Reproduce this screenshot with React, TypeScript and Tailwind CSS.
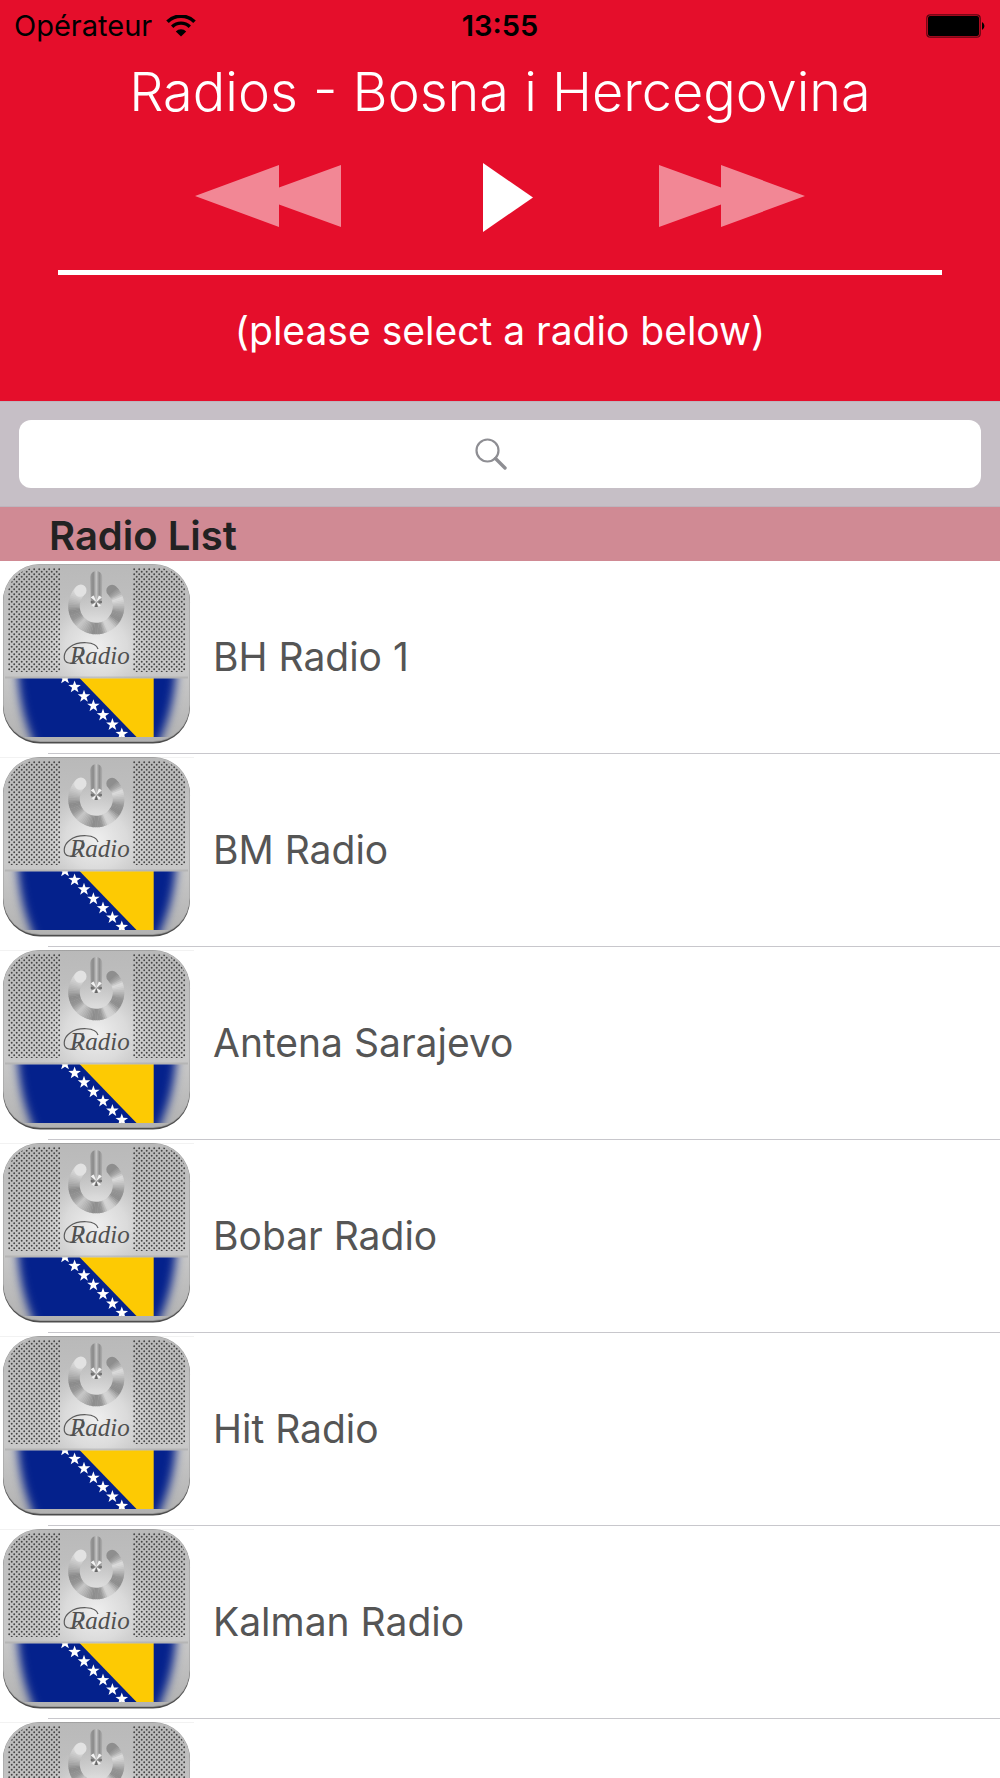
import React, { useState } from "react";

const STATIONS = [
  "BH Radio 1",
  "BM Radio",
  "Antena Sarajevo",
  "Bobar Radio",
  "Hit Radio",
  "Kalman Radio",
  "",
];

const STARS: [number, number][] = [
  [65, 117],
  [74.6, 126],
  [84, 135.4],
  [93.4, 144.8],
  [103, 154.2],
  [112.4, 163.6],
  [121.8, 173],
];

// Grey levels of the brushed ring, by angle clockwise from the top.
const RING_STOPS: [number, number][] = [
  [46, 140],
  [58, 165],
  [72, 222],
  [88, 190],
  [104, 150],
  [122, 140],
  [140, 205],
  [154, 214],
  [168, 150],
  [186, 140],
  [204, 172],
  [222, 200],
  [240, 150],
  [258, 138],
  [276, 175],
  [296, 205],
  [314, 226],
];

function starPoints(cx: number, cy: number, r: number) {
  return Array.from({ length: 10 }, (_, i) => {
    const a = (Math.PI / 5) * i - Math.PI / 2;
    const d = i % 2 === 0 ? r : r * 0.4;
    return `${(cx + d * Math.cos(a)).toFixed(2)},${(cy + d * Math.sin(a)).toFixed(2)}`;
  }).join(" ");
}

function ringGrey(angle: number) {
  const next = RING_STOPS.findIndex(([a]) => a > angle);
  if (next === 0) return RING_STOPS[0][1];
  if (next < 0) return RING_STOPS[RING_STOPS.length - 1][1];
  const [a0, g0] = RING_STOPS[next - 1];
  const [a1, g1] = RING_STOPS[next];
  return Math.round(g0 + ((angle - a0) / (a1 - a0)) * (g1 - g0));
}

function ringPoint(angle: number) {
  const a = (angle * Math.PI) / 180;
  return `${(96.3 + 22.3 * Math.sin(a)).toFixed(2)} ${(45.3 - 22.3 * Math.cos(a)).toFixed(2)}`;
}

function Ring() {
  return (
    <g fill="none" strokeWidth="11.500">
      {Array.from({ length: 68 }, (_, i) => {
        const start = 45 + i * 4;
        const end = Math.min(start + 5, 316);
        const g = ringGrey(start + 2);
        return (
          <path
            key={start}
            d={`M${ringPoint(start)}A22.3 22.3 0 0 1 ${ringPoint(end)}`}
            stroke={`rgb(${g},${g},${g})`}
            strokeLinecap={i === 0 || i === 67 ? "round" : "butt"}
          />
        );
      })}
    </g>
  );
}

function ArtworkDefs() {
  return (
    <svg width="0" height="0" className="absolute" aria-hidden="true">
      <defs>
        <linearGradient id="metal" x1="0" y1="0" x2="0" y2="1">
          <stop offset="0" stopColor="#b9b9b9" />
          <stop offset="0.6" stopColor="#c9c9c9" />
          <stop offset="1" stopColor="#b2b2b2" />
        </linearGradient>
        <radialGradient id="glow" cx="0.5" cy="0.5" r="0.5">
          <stop offset="0" stopColor="#f0f0f0" />
          <stop offset="0.5" stopColor="#e0e0e0" stopOpacity="0.8" />
          <stop offset="1" stopColor="#cccccc" stopOpacity="0" />
        </radialGradient>
        <linearGradient id="stem" x1="0" y1="0" x2="1" y2="0">
          <stop offset="0" stopColor="#9c9c9c" />
          <stop offset="0.25" stopColor="#8a8a8a" />
          <stop offset="0.5" stopColor="#c6c6c6" />
          <stop offset="0.75" stopColor="#8e8e8e" />
          <stop offset="1" stopColor="#b0b0b0" />
        </linearGradient>
        <pattern id="holes" x="8" y="7" width="5" height="5" patternUnits="userSpaceOnUse">
          <circle cx="1.2" cy="1.2" r="0.95" fill="#444" />
          <circle cx="3.7" cy="3.7" r="0.95" fill="#444" />
        </pattern>
        <filter id="soft" x="-20%" y="-20%" width="140%" height="140%">
          <feGaussianBlur stdDeviation="5" />
        </filter>
        <mask id="flagFade" maskUnits="userSpaceOnUse" x="0" y="110" width="194" height="72">
          <path d="M17 90H177C177 140 166 168 150 200H42C26 168 17 140 17 90Z" fill="#fff" filter="url(#soft)" />
        </mask>
        <clipPath id="flagBox">
          <rect x="6" y="117.500" width="182" height="58.500" />
        </clipPath>
        <clipPath id="grill">
          <rect x="7" y="6.500" width="180" height="105" rx="30" />
          <rect x="7" y="50" width="180" height="61" />
        </clipPath>
        <g id="artwork">
          <rect x="3" y="4.500" width="187" height="178" rx="37" fill="#4d4d4d" />
          <rect x="3" y="3" width="187" height="178" rx="37" fill="#9c9c9c" />
          <rect x="3.500" y="3.500" width="186" height="176.500" rx="36" fill="url(#metal)" />
          <ellipse cx="96" cy="86" rx="62" ry="58" fill="url(#glow)" />
          <g clipPath="url(#grill)">
            <rect x="8" y="7" width="52" height="104" fill="url(#holes)" />
            <rect x="133" y="7" width="52" height="104" fill="url(#holes)" />
          </g>
          <Ring />
          <path d="M90.300 16a6 6 0 0 1 12 0L101.800 40.500a5.500 5.500 0 0 1-11 0Z" fill="url(#stem)" />
          <path d="M96.300 41l-5.500-4.500a7 7 0 0 1 3-2ZM96.300 41l5.500-4.500a7 7 0 0 0-3-2ZM96.300 41l-5 3 2.600 2ZM96.300 41l5 3-2.600 2Z" fill="#f2f2f2" />
          <path d="M96.300 41l-1.500 5h3ZM96.300 41l-5.500-1v2ZM96.300 41l5.500-1v2Z" fill="#666" />
          <path d="M83 86C82 96 76 103 69 102C62 101 63 91 70 86C78 80 96 80 98 88" fill="none" stroke="#5c5c5c" strokeWidth="1.200" />
          <text x="70" y="103" fontSize="25" fontStyle="italic" fontFamily="'Liberation Serif', serif" fill="#505050">
            Radio
          </text>
          <rect x="5" y="115.500" width="183" height="2" fill="#9a9a9a" opacity="0.400" />
          <g clipPath="url(#flagBox)" mask="url(#flagFade)">
            <rect x="6" y="117" width="182" height="60" fill="#04218c" />
            <path d="M79.500 117H153.700V176H136.500Z" fill="#fdca03" />
            {STARS.map(([x, y]) => (
              <polygon key={x} points={starPoints(x, y, 6.6)} fill="#fff" />
            ))}
          </g>
        </g>
      </defs>
    </svg>
  );
}

function Artwork() {
  return (
    <svg viewBox="0 0 194 192" className="block h-48 w-[194px] shrink-0" aria-hidden="true">
      <use href="#artwork" />
    </svg>
  );
}

function Wifi() {
  return (
    <svg viewBox="0 0 30 22" className="h-[22px] w-[30px]" aria-label="Wi-Fi">
      <path d="M1.500 6.800A19 19 0 0 1 28.500 6.800" fill="none" stroke="#000" strokeWidth="3.600" />
      <path d="M6.200 11.700A12.500 12.500 0 0 1 23.800 11.700" fill="none" stroke="#000" strokeWidth="3.400" />
      <path d="M15 21.500L9.800 16.400A7.200 7.200 0 0 1 20.200 16.400Z" />
    </svg>
  );
}

function Battery() {
  return (
    <svg viewBox="0 0 60 24" className="h-6 w-[60px]" aria-label="Battery full">
      <rect x="0.800" y="0.800" width="53.400" height="22.400" rx="3.500" fill="none" stroke="#5a0510" strokeWidth="1.200" />
      <rect x="2" y="2" width="51" height="20" rx="2" />
      <path d="M56 8a4.500 4.500 0 0 1 0 8Z" />
    </svg>
  );
}

export default function App() {
  const [query, setQuery] = useState("");
  return (
    <div className="h-screen overflow-hidden bg-white font-['Inter',sans-serif]">
      <ArtworkDefs />
      <header className="flex flex-col items-center bg-[#e50e2b] pb-[42px] text-white">
        <div className="grid w-full grid-cols-3 items-center px-[14px] pt-1 text-[29px] leading-[44px] text-black">
          <div className="flex items-center gap-[14px]">
            <span>Opérateur</span>
            <Wifi />
          </div>
          <span className="text-center font-semibold">13:55</span>
          <div className="flex justify-end">
            <Battery />
          </div>
        </div>
        <h1 className="pt-2 text-[54px] leading-[72px] font-light">Radios - Bosna i Hercegovina</h1>
        <div className="mt-[34px] flex w-[61%] items-center justify-between">
          <button type="button" aria-label="Previous" className="opacity-50">
            <svg viewBox="0 0 146 64" className="block h-16 w-[146px] fill-white">
              <path d="M0 31L84 0V22.500L146 0V62L84 39.500V62Z" />
            </svg>
          </button>
          <button type="button" aria-label="Play">
            <svg viewBox="0 0 66 70" className="block h-[70px] w-[66px] fill-white">
              <path d="M16 1V70L66 35.500Z" />
            </svg>
          </button>
          <button type="button" aria-label="Next" className="opacity-50">
            <svg viewBox="0 0 146 64" className="block h-16 w-[146px] fill-white">
              <path d="M146 31L62 0V22.500L0 0V62L62 39.500V62Z" />
            </svg>
          </button>
        </div>
        <div className="mt-[38px] h-[5px] w-[88.4%] bg-white" />
        <p className="mt-7 text-[39px] leading-[56px]">(please select a radio below)</p>
      </header>

      <div className="border-y border-[#bdb5bd] bg-[#c6bfc6] px-[19px] py-[18px]">
        <div className="relative">
          <input
            type="search"
            aria-label="Search radios"
            value={query}
            onChange={(e) => setQuery(e.target.value)}
            className="block h-[68px] w-full rounded-xl bg-white px-5 text-[32px] text-[#222] outline-none"
          />
          {query === "" && (
            <span className="pointer-events-none absolute inset-0 flex items-center justify-center pr-[18px]">
              <svg viewBox="0 0 32 32" className="h-8 w-8" fill="none" stroke="#8e8e93">
                <circle cx="12.500" cy="12.500" r="11" strokeWidth="2.200" />
                <path d="M20.500 20.500L30 30" strokeWidth="3.400" strokeLinecap="round" />
              </svg>
            </span>
          )}
        </div>
      </div>

      <h2 className="bg-[#d08a94] pt-1 pl-[49px] text-[40px] leading-[50px] font-semibold text-[#222]">Radio List</h2>
      <ul>
        {STATIONS.map((name, i) => (
          <li key={i} className="relative h-[193px]">
            <button type="button" aria-label={name || "Radio station"} className="flex w-full items-center gap-[19px] text-left">
              <Artwork />
              <span className="text-[39px] leading-[48px] text-[#555]">{name}</span>
            </button>
            {i > 0 && <span className="absolute top-[3px] left-0 h-px w-[194px] bg-black/5" />}
            <span className="absolute right-0 bottom-0 left-12 h-px bg-[#c8c7cc]" />
          </li>
        ))}
      </ul>
    </div>
  );
}
